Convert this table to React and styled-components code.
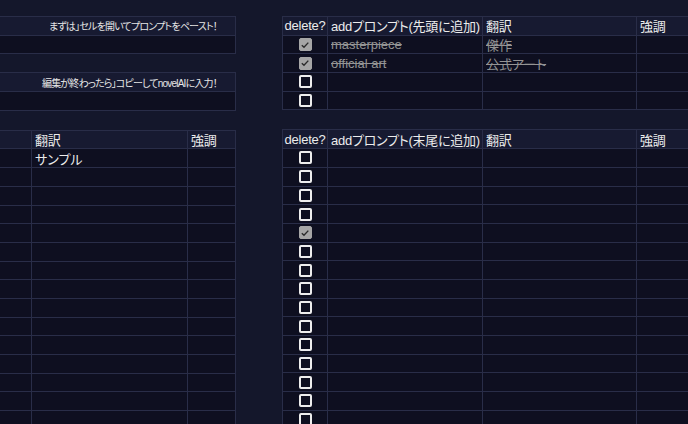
import React from "react";
import styled, { createGlobalStyle } from "styled-components";

const GlobalStyle = createGlobalStyle`
  html, body { margin: 0; padding: 0; }
  body {
    background: #14172b;
    overflow: hidden;
    font-family: "Liberation Sans", "Noto Sans CJK JP", sans-serif;
    font-feature-settings: "palt";
    color: #ececec;
  }
`;

const ROW_H = "18.7px";
const BORDER = "#292d48";

const Page = styled.div`
  display: flex;
  gap: 46px;
  padding-top: 16px;
  width: 760px;
`;

const LeftColumn = styled.div`
  width: 236px;
  flex: none;
  overflow: hidden;
  display: flex;
  flex-direction: column;
  align-items: flex-end;
`;

const RightColumn = styled.div`
  flex: none;
  display: flex;
  flex-direction: column;
`;

const Table = styled.div`
  flex: none;
  width: ${(p) => p.$width}px;
  border-top: 1px solid ${BORDER};
  border-left: 1px solid ${BORDER};
  margin-bottom: ${(p) => p.$gap || 0}px;
  box-sizing: border-box;
`;

const Row = styled.div`
  display: grid;
  grid-template-columns: ${(p) => p.$cols};
  height: ${ROW_H};
  box-sizing: border-box;
  border-bottom: 1px solid ${BORDER};
  background: ${(p) => (p.$head ? "#171a31" : "#0e0f20")};
`;

const Cell = styled.div`
  border-right: 1px solid ${BORDER};
  box-sizing: border-box;
  display: flex;
  align-items: center;
  justify-content: ${(p) => (p.$center ? "center" : "flex-start")};
  padding: 0 3px;
  font-size: 13px;
  color: ${(p) => (p.$muted ? "#949494" : "#ececec")};
  text-decoration: ${(p) => (p.$strike ? "line-through" : "none")};
  white-space: nowrap;
  overflow: hidden;
  letter-spacing: ${(p) => (p.$head ? "-0.25px" : "0")};
`;

const NoteCell = styled(Cell)`
  justify-content: flex-end;
  padding-right: 18px;
  font-size: 10px;
  letter-spacing: -0.8px;
  color: #e6e6e6;
`;

const Box = styled.span`
  width: 13px;
  height: 13px;
  box-sizing: border-box;
  border-radius: 2px;
  display: inline-flex;
  align-items: center;
  justify-content: center;
  ${(p) =>
    p.$checked
      ? `background: #a6a6a6; border: 1px solid #a6a6a6;`
      : `background: #0e0f20; border: 2px solid #ededed;`}
`;

const Checkbox = ({ checked }) => (
  <Box $checked={checked}>
    {checked && (
      <svg width="10" height="10" viewBox="0 0 10 10">
        <path d="M1.8 5.2 L4 7.3 L8.3 2.6" fill="none" stroke="#2b2b2b" strokeWidth="1.4" />
      </svg>
    )}
  </Box>
);

const RCOLS = "45px 155px 154px 70px";
const LCOLS = "45px 155px 156px 48px";

const Note = ({ text, gap }) => (
  <Table $width={420} $gap={gap}>
    <Row $cols="1fr" $head>
      <NoteCell>{text}</NoteCell>
    </Row>
    <Row $cols="1fr">
      <Cell />
    </Row>
  </Table>
);

const Header = ({ cols, addLabel }) => (
  <Row $cols={cols} $head>
    <Cell $center $head>{addLabel ? "delete?" : ""}</Cell>
    <Cell $head>{addLabel}</Cell>
    <Cell $head>翻訳</Cell>
    <Cell $head>強調</Cell>
  </Row>
);

const topRows = [
  { checked: true, prompt: "masterpiece", trans: "傑作" },
  { checked: true, prompt: "official art", trans: "公式アート" },
  { checked: false },
  { checked: false },
];

const bottomChecked = [4];
const N = 15;

export default function App() {
  return (
    <>
      <GlobalStyle />
      <Page>
        <LeftColumn>
          <Note text="まずは｣セルを開いてプロンプトをペースト！" gap={18} />
          <Note text="編集が終わったら｣コピーしてnovelAIに入力！" gap={19} />
          <Table $width={405}>
            <Header cols={LCOLS} addLabel="" />
            {Array.from({ length: N }).map((_, i) => (
              <Row key={i} $cols={LCOLS}>
                <Cell $center />
                <Cell />
                <Cell>{i === 0 ? "サンプル" : ""}</Cell>
                <Cell />
              </Row>
            ))}
          </Table>
        </LeftColumn>
        <RightColumn>
          <Table $width={425} $gap={19}>
            <Header cols={RCOLS} addLabel="addプロンプト(先頭に追加)" />
            {topRows.map((r, i) => (
              <Row key={i} $cols={RCOLS}>
                <Cell $center>
                  <Checkbox checked={r.checked} />
                </Cell>
                <Cell $muted $strike={r.checked}>{r.prompt}</Cell>
                <Cell $muted $strike={r.checked}>{r.trans}</Cell>
                <Cell />
              </Row>
            ))}
          </Table>
          <Table $width={425}>
            <Header cols={RCOLS} addLabel="addプロンプト(末尾に追加)" />
            {Array.from({ length: N }).map((_, i) => (
              <Row key={i} $cols={RCOLS}>
                <Cell $center>
                  <Checkbox checked={bottomChecked.includes(i)} />
                </Cell>
                <Cell />
                <Cell />
                <Cell />
              </Row>
            ))}
          </Table>
        </RightColumn>
      </Page>
    </>
  );
}
